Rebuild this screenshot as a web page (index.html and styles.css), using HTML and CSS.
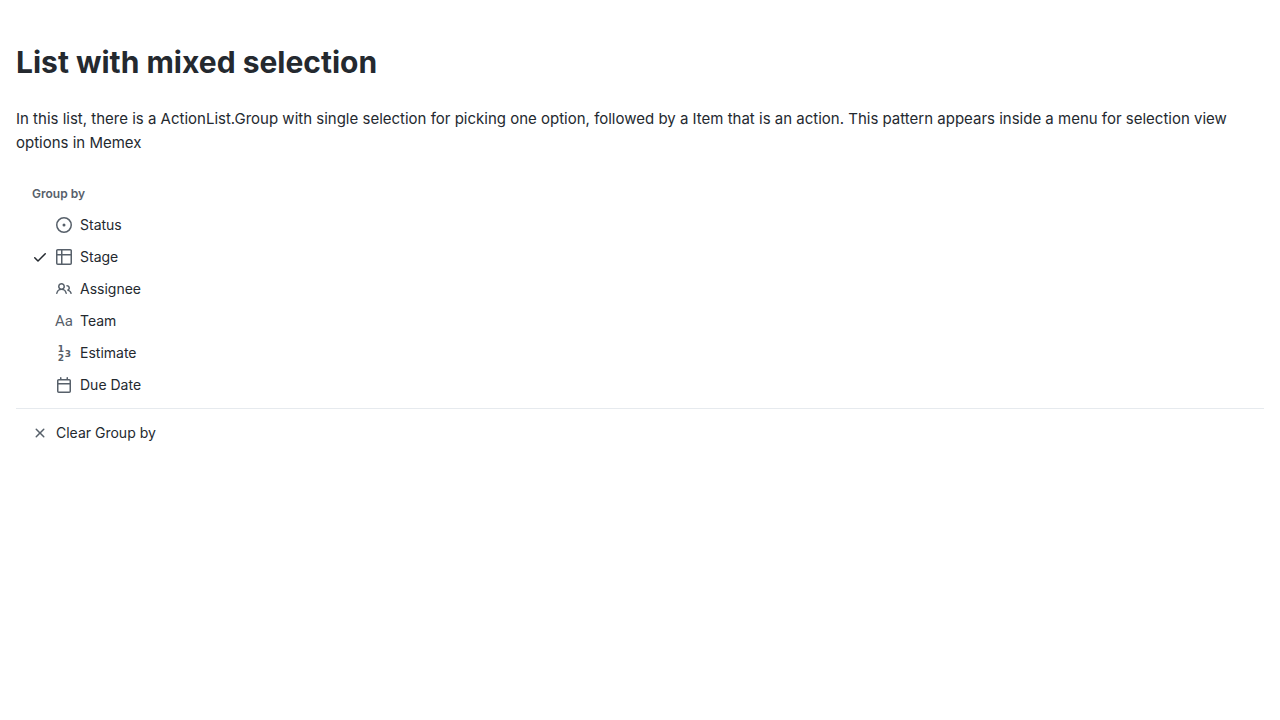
FILE: index.html
```html
<!DOCTYPE html>
<html lang="en">
<head>
<meta charset="utf-8">
<meta name="viewport" content="width=device-width, initial-scale=1">
<title>List with mixed selection</title>
<link rel="stylesheet" href="styles.css">
</head>
<body>
<main class="page">
  <h1 class="title">List with mixed selection</h1>
  <p class="intro">In this list, there is a ActionList.Group with single selection for picking one option, followed by a Item that is an action. This pattern appears inside a menu for selection view options in Memex</p>
  <div class="action-list">
    <div class="group" role="radiogroup" aria-labelledby="group-by">
      <h2 class="group-title" id="group-by">Group by</h2>
      <label class="item">
        <span class="select"><input class="radio" type="radio" name="group"><svg class="icon check" viewBox="0 0 16 16" aria-hidden="true"><path d="M13.78 4.22a.75.75 0 010 1.06l-7.25 7.25a.75.75 0 01-1.06 0L2.22 9.28a.75.75 0 011.06-1.06L6 10.94l6.72-6.72a.75.75 0 011.06 0z"/></svg></span>
        <svg class="icon" viewBox="0 0 16 16" aria-hidden="true"><path d="M8 9.5a1.5 1.5 0 100-3 1.5 1.5 0 000 3z"/><path fill-rule="evenodd" d="M8 0a8 8 0 100 16A8 8 0 008 0zM1.5 8a6.5 6.5 0 1113 0 6.5 6.5 0 01-13 0z"/></svg>
        <span>Status</span>
      </label>
      <label class="item">
        <span class="select"><input class="radio" type="radio" name="group" checked><svg class="icon check" viewBox="0 0 16 16" aria-hidden="true"><path d="M13.78 4.22a.75.75 0 010 1.06l-7.25 7.25a.75.75 0 01-1.06 0L2.22 9.28a.75.75 0 011.06-1.06L6 10.94l6.72-6.72a.75.75 0 011.06 0z"/></svg></span>
        <svg class="icon" viewBox="0 0 16 16" aria-hidden="true"><path fill-rule="evenodd" d="M0 1.75C0 .784.784 0 1.75 0h12.5C15.216 0 16 .784 16 1.75v12.5A1.75 1.75 0 0114.25 16H1.75A1.75 1.75 0 010 14.25V1.75zM1.5 6.5v7.75c0 .138.112.25.25.25H5v-8H1.5zM6.5 6.5v8h7.75a.25.25 0 00.25-.25V6.5h-8zM14.5 5V1.75a.25.25 0 00-.25-.25H6.5V5h8zM5 5V1.5H1.75a.25.25 0 00-.25.25V5H5z"/></svg>
        <span>Stage</span>
      </label>
      <label class="item">
        <span class="select"><input class="radio" type="radio" name="group"><svg class="icon check" viewBox="0 0 16 16" aria-hidden="true"><path d="M13.78 4.22a.75.75 0 010 1.06l-7.25 7.25a.75.75 0 01-1.06 0L2.22 9.28a.75.75 0 011.06-1.06L6 10.94l6.72-6.72a.75.75 0 011.06 0z"/></svg></span>
        <svg class="icon" viewBox="0 0 16 16" aria-hidden="true"><path fill-rule="evenodd" d="M5.5 3.5a2 2 0 100 4 2 2 0 000-4zM2 5.5a3.5 3.5 0 115.898 2.549 5.507 5.507 0 013.034 4.084.75.75 0 11-1.482.235 4.001 4.001 0 00-7.9 0 .75.75 0 01-1.482-.236A5.507 5.507 0 013.102 8.05 3.49 3.49 0 012 5.5zM11 4a.75.75 0 100 1.5 1.5 1.5 0 01.666 2.844.75.75 0 00-.416.672v.352a.75.75 0 00.574.73c1.2.289 2.162 1.2 2.522 2.372a.75.75 0 101.434-.44 5.01 5.01 0 00-2.56-3.012A3 3 0 0011 4z"/></svg>
        <span>Assignee</span>
      </label>
      <label class="item">
        <span class="select"><input class="radio" type="radio" name="group"><svg class="icon check" viewBox="0 0 16 16" aria-hidden="true"><path d="M13.78 4.22a.75.75 0 010 1.06l-7.25 7.25a.75.75 0 01-1.06 0L2.22 9.28a.75.75 0 011.06-1.06L6 10.94l6.72-6.72a.75.75 0 011.06 0z"/></svg></span>
        <svg class="icon" viewBox="0 0 16 16" aria-hidden="true"><text class="letters" x="8" y="13">Aa</text></svg>
        <span>Team</span>
      </label>
      <label class="item">
        <span class="select"><input class="radio" type="radio" name="group"><svg class="icon check" viewBox="0 0 16 16" aria-hidden="true"><path d="M13.78 4.22a.75.75 0 010 1.06l-7.25 7.25a.75.75 0 01-1.06 0L2.22 9.28a.75.75 0 011.06-1.06L6 10.94l6.72-6.72a.75.75 0 011.06 0z"/></svg></span>
        <svg class="icon" viewBox="0 0 16 16" aria-hidden="true"><text class="digit" x="5" y="7">1</text><text class="digit" x="5" y="16">2</text><text class="digit" x="12" y="12">3</text></svg>
        <span>Estimate</span>
      </label>
      <label class="item">
        <span class="select"><input class="radio" type="radio" name="group"><svg class="icon check" viewBox="0 0 16 16" aria-hidden="true"><path d="M13.78 4.22a.75.75 0 010 1.06l-7.25 7.25a.75.75 0 01-1.06 0L2.22 9.28a.75.75 0 011.06-1.06L6 10.94l6.72-6.72a.75.75 0 011.06 0z"/></svg></span>
        <svg class="icon" viewBox="0 0 16 16" aria-hidden="true"><path fill-rule="evenodd" d="M4.75 0a.75.75 0 01.75.75V2h5V.75a.75.75 0 011.5 0V2h1.25c.966 0 1.75.784 1.75 1.75v10.5A1.75 1.75 0 0113.25 16H2.75A1.75 1.75 0 011 14.25V3.75C1 2.784 1.784 2 2.75 2H4V.75A.75.75 0 014.75 0zm0 3.5h8.5a.25.25 0 01.25.25V6h-11V3.75a.25.25 0 01.25-.25h2zm-2.25 4v6.75c0 .138.112.25.25.25h10.5a.25.25 0 00.25-.25V7.5h-11z"/></svg>
        <span>Due Date</span>
      </label>
    </div>
    <hr class="divider">
    <button class="item" type="button">
      <svg class="icon" viewBox="0 0 16 16" aria-hidden="true"><path d="M3.72 3.72a.75.75 0 011.06 0L8 6.94l3.22-3.22a.75.75 0 111.06 1.06L9.06 8l3.22 3.22a.75.75 0 11-1.06 1.06L8 9.06l-3.22 3.22a.75.75 0 01-1.06-1.06L6.94 8 3.72 4.78a.75.75 0 010-1.06z"/></svg>
      <span>Clear Group by</span>
    </button>
  </div>
</main>
</body>
</html>
```
FILE: styles.css
```css
* {
  box-sizing: border-box;
}

body {
  margin: 0;
  background: #fff;
  color: #24292f;
  font-family: Inter, "Liberation Sans", sans-serif;
  font-size: 15px;
  line-height: 24px;
}

.page {
  padding: 38px 16px 16px;
}

.title {
  margin: 0 0 21px;
  font-size: 30px;
  font-weight: 700;
  line-height: 48px;
}

.intro {
  margin: 0 0 16px;
}

.action-list {
  padding: 8px 0;
  font-size: 14px;
  line-height: 20px;
}

.group-title {
  margin: 0;
  padding: 6px 16px;
  color: #57606a;
  font-size: 12px;
  font-weight: 600;
  line-height: 18px;
}

.item {
  display: flex;
  align-items: center;
  gap: 8px;
  width: calc(100% - 16px);
  margin: 0 8px;
  padding: 6px 8px;
  border: 0;
  border-radius: 6px;
  background: none;
  color: #24292f;
  font: inherit;
  text-align: left;
  cursor: pointer;
}

.item:hover {
  background: #f3f4f6;
}

.select {
  display: grid;
  width: 16px;
  height: 16px;
}

.radio {
  grid-area: 1 / 1;
  width: 16px;
  height: 16px;
  margin: 0;
  appearance: none;
}

.icon {
  flex: none;
  display: block;
  width: 16px;
  height: 16px;
  fill: #57606a;
  overflow: visible;
}

.check {
  grid-area: 1 / 1;
  fill: #24292f;
  visibility: hidden;
}

.radio:checked + .check {
  visibility: visible;
}

.letters {
  font-family: Roboto, sans-serif;
  font-size: 15px;
  text-anchor: middle;
}

.digit {
  font-family: "DejaVu Sans", sans-serif;
  font-size: 9px;
  font-weight: 700;
  text-anchor: middle;
}

.divider {
  height: 1px;
  margin: 7px 0 8px;
  border: 0;
  background: #e6eaee;
}
```
